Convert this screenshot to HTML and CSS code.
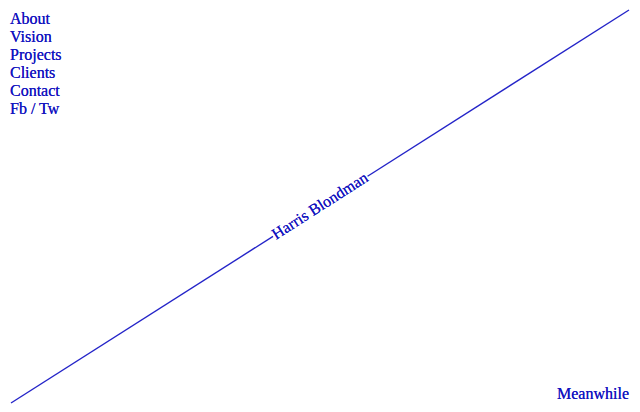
FILE: index.html
```html
<!DOCTYPE html>
<html lang="en">
<head>
<meta charset="utf-8">
<title>Harris Blondman</title>
<link rel="stylesheet" href="styles.css">
</head>
<body>
<nav class="menu">
<a href="#about">About</a>
<a href="#vision">Vision</a>
<a href="#projects">Projects</a>
<a href="#clients">Clients</a>
<a href="#contact">Contact</a>
<span><a href="#fb">Fb</a> / <a href="#tw">Tw</a></span>
</nav>
<svg class="diagonal" aria-hidden="true">
<line x1="0" y1="100%" x2="42.4%" y2="57.6%"/>
<line x1="57.7%" y1="42.3%" x2="100%" y2="0"/>
</svg>
<h1 class="name">Harris Blondman</h1>
<footer class="footer"><a href="#meanwhile">Meanwhile</a></footer>
</body>
</html>
```
FILE: styles.css
```css
* { box-sizing: border-box; }
body {
  position: relative;
  display: flex;
  flex-direction: column;
  justify-content: space-between;
  min-height: 100vh;
  margin: 0;
  padding: 10px 11px 9px 10px;
  background: #fff;
  color: #1414c0;
  font-family: "Liberation Serif", serif;
  font-size: 16px;
  line-height: 18px;
  text-shadow: 0 0 0 currentColor;
}
a { color: inherit; text-decoration: none; }
.menu {
  position: relative;
  z-index: 1;
  display: flex;
  flex-direction: column;
  align-items: flex-start;
}
.diagonal {
  position: absolute;
  inset: 10px 11px 9px;
  width: calc(100% - 22px);
  height: calc(100% - 19px);
  overflow: visible;
  stroke: #2424c8;
  stroke-width: 1.4;
}
.name {
  position: absolute;
  top: 50%;
  left: 50%;
  margin: 0;
  font-size: 16px;
  font-weight: 400;
  white-space: nowrap;
  transform: translate(-50%, -50%) rotate(-32.5deg);
}
.footer { position: relative; align-self: flex-end; }
```
